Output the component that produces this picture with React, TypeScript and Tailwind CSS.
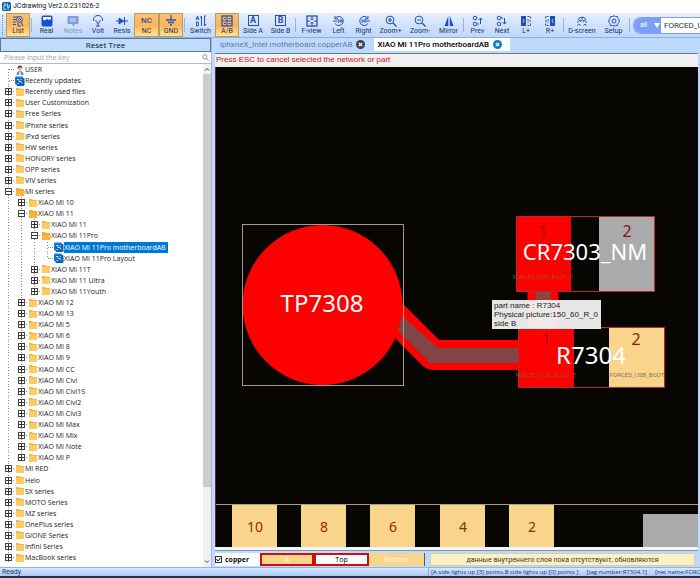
import React from "react";
import clsx from "clsx";

const BLUE = "#2450b8";

const icons: Record<string, React.ReactNode> = {
  list: (
    <>
      <path d="M1 2h5M1 4.500h3M1 7h3M1 9.500h3" />
      <circle cx="7.500" cy="4.500" r="3" />
      <circle cx="7.500" cy="4.500" r="1" />
      <path d="M9 7l2 4M6 8v3h3" />
    </>
  ),
  real: (
    <>
      <rect x="1" y="1" width="10" height="10" rx="1" fill="#174fd0" />
      <path d="M2 4.500V2h8v2l-2 1-2-1-2 1.500z" fill="#eaf4ff" stroke="none" />
    </>
  ),
  notes: (
    <>
      <path d="M1 1.500h10v7H8l-2 2.500v-2.500H1z" fill="#7f9ddd" stroke="#7f9ddd" />
      <path d="M3 4h6M3 6h6" stroke="#d9e8ff" />
    </>
  ),
  volt: <path d="M1.500 6a4.600 4.600 0 1 1 9 0M3.500 5L6 9l2.500-4M6 9v2.500M4 11h4" />,
  resis: (
    <>
      <path d="M0 6h12M8.500 2v8" />
      <path d="M3 3l4.500 3L3 9z" fill={BLUE} />
    </>
  ),
  gnd: <path d="M6 0v5M1 5h10M3 7.500h6M5 10h2" strokeWidth="1.300" />,
  switch: (
    <path d="M1 5l1.500-4L4 5M1.500 3.700h2M1.500 7v4H3q1.500-1 0-2 1-1 0-2zM6.500 1v10M6.500 1L5.500 3M9.500 1v10l1.500-2M9 1h2" />
  ),
  ab: (
    <>
      <rect x="1" y="1" width="10" height="10" strokeWidth="1.300" />
      <path d="M6 1v10M1 6h10M3 3.500h2M7.500 3.500h2M3 8.500h2M7.500 8.500h2" />
    </>
  ),
  frame: (
    <>
      <rect x="1" y="1" width="10" height="10" strokeWidth="1.300" />
      <path d="M6 1v3M6 8v3M1 6h3M8 6h3M4.500 3.500L6 5l1.500-1.500M4.500 8.500L6 7l1.500 1.500" />
    </>
  ),
  left: (
    <>
      <path d="M2 3.500A4.500 4.500 0 1 1 2 8.500M2 .800v3h3M0 6h4" />
      <circle cx="8" cy="6" r="1.200" />
      <path d="M4.500 4.700h1.300v2.600H4.500M5.800 6H4.500" strokeWidth=".7" />
    </>
  ),
  right: (
    <>
      <path d="M10 3.500A4.500 4.500 0 1 0 10 8.500M10 .800v3H7M12 6H9" />
      <circle cx="7" cy="6" r="1.200" />
      <path d="M3.500 4.700h1.300v2.600H3.500M4.800 6H3.500" strokeWidth=".7" />
    </>
  ),
  zoomIn: (
    <>
      <circle cx="5" cy="5" r="3.900" />
      <path d="M8 8l3.500 3.500M3 5h4M5 3v4" strokeWidth="1.200" />
    </>
  ),
  zoomOut: (
    <>
      <circle cx="5" cy="5" r="3.900" />
      <path d="M8 8l3.500 3.500M3 5h4" strokeWidth="1.200" />
    </>
  ),
  mirror: (
    <>
      <path d="M5.300 1v10H1.500z" fill="#174fd0" stroke="none" />
      <path d="M6.800 1v10h3.800z" fill="#174fd0" stroke="none" />
    </>
  ),
  prev: (
    <>
      <circle cx="3" cy="3" r="1.800" />
      <circle cx="3" cy="9" r="1.800" />
      <path d="M8.500 9V3M6.500 5l2-2 2 2M5 9h2" />
    </>
  ),
  next: (
    <>
      <circle cx="3" cy="3" r="1.800" />
      <circle cx="3" cy="9" r="1.800" />
      <path d="M8.500 3v6M6.500 7l2 2 2-2M5 3h2" />
    </>
  ),
  lplus: (
    <>
      <rect x="1.500" y="1.500" width="4" height="9" fill="#174fd0" />
      <path d="M7.500 1.500h3v2M7.500 10.500h3v-2M8 4v4M10 5v2" strokeDasharray="2 1" />
      <path d="M3 4l1 2-1 2" stroke="#9cc0ff" />
    </>
  ),
  rplus: (
    <>
      <rect x="6.500" y="1.500" width="4" height="9" fill="#174fd0" />
      <path d="M4.500 1.500h-3v2M4.500 10.500h-3v-2M4 4v4M2 5v2" strokeDasharray="2 1" />
      <path d="M9 4L8 6l1 2" stroke="#9cc0ff" />
    </>
  ),
  dscreen: (
    <path d="M2 5a4.200 4.200 0 0 1 8 0M1 7.500L4 5l1 2M11 7.500L8 5 7 7M1.500 10.500q1-3 3 0M7.500 10.500q2-3 3 0M6 3v3" />
  ),
  setup: (
    <>
      <path d="M6 .800l1.700.7 1.800.1.500 1.800L11.200 5v2L10 8.600l-.5 1.800-1.800.1L6 11.200l-1.700-.7-1.800-.1L2 8.600.800 7V5L2 3.400l.5-1.800 1.800-.1z" />
      <circle cx="6" cy="6" r="2" />
    </>
  ),
};

function Glyph({ name }: { name: string }) {
  if (name === "nc")
    return <span className="flex h-[12px] items-center text-[8px] font-medium leading-[12px] text-[#3b4c9c]">NC</span>;
  if (name === "a" || name === "b")
    return (
      <span className="mb-px flex size-[11px] items-center justify-center border border-[#2450b8] text-[9px] font-bold leading-[9px] text-[#2450b8]">
        {name.toUpperCase()}
      </span>
    );
  return (
    <svg viewBox="0 0 12 12" className="size-[12px] shrink-0" fill="none" stroke={BLUE} strokeWidth="1" aria-hidden="true">
      {icons[name]}
    </svg>
  );
}

type Tool = { label: string; icon: string; w: string; on?: boolean; off?: boolean };

const groups: Tool[][] = [
  [{ label: "List", icon: "list", w: "w-[24px]", on: true }],
  [
    { label: "Real", icon: "real", w: "w-[27px]" },
    { label: "Notes", icon: "notes", w: "w-[26px]", off: true },
    { label: "Volt", icon: "volt", w: "w-[24px]" },
    { label: "Resis", icon: "resis", w: "w-[24px]" },
    { label: "NC", icon: "nc", w: "w-[25px]", on: true },
    { label: "GND", icon: "gnd", w: "w-[24px]", on: true },
  ],
  [
    { label: "Switch", icon: "switch", w: "w-[29px]" },
    { label: "A/B", icon: "ab", w: "w-[24px]", on: true },
    { label: "Side A", icon: "a", w: "w-[28px]" },
    { label: "Side B", icon: "b", w: "w-[27px]" },
  ],
  [
    { label: "F-view", icon: "frame", w: "w-[29px]" },
    { label: "Left", icon: "left", w: "w-[25px]" },
    { label: "Right", icon: "right", w: "w-[25px]" },
    { label: "Zoom+", icon: "zoomIn", w: "w-[29px]" },
    { label: "Zoom-", icon: "zoomOut", w: "w-[30px]" },
    { label: "Mirror", icon: "mirror", w: "w-[27px]" },
  ],
  [
    { label: "Prev", icon: "prev", w: "w-[25px]" },
    { label: "Next", icon: "next", w: "w-[24px]" },
    { label: "L+", icon: "lplus", w: "w-[24px]" },
    { label: "R+", icon: "rplus", w: "w-[24px]" },
  ],
  [
    { label: "D-screen", icon: "dscreen", w: "w-[34px]" },
    { label: "Setup", icon: "setup", w: "w-[29px]" },
  ],
];

function Toolbar() {
  return (
    <div className="flex h-[25px] shrink-0 items-center border-b border-[#8fb0dc] bg-linear-to-b from-[#e6f0fd] via-[#d0e2fb] to-[#bfd8fb] pl-[2px] font-['Roboto',sans-serif]">
      <span className="mr-[3px] h-[20px] border-l border-dotted border-[#6c86b5]" />
      {groups.map((g, i) => (
        <React.Fragment key={i}>
          {i > 0 && <span className="mx-px h-[14px] w-px shrink-0 bg-[#98b3d8]" />}
          {g.map((t) => (
            <button
              key={t.label}
              className={clsx(
                "flex h-[24px] shrink-0 flex-col items-center justify-center text-[7px] leading-[9px]",
                t.w,
                t.off ? "text-[#8d99b0]" : "text-[#1c2f66]",
                t.on && "border border-[#b99a62] bg-linear-to-b from-[#fbc171] via-[#fbb557] to-[#ffe28f]"
              )}
            >
              <Glyph name={t.icon} />
              <span className="whitespace-nowrap">{t.label}</span>
            </button>
          ))}
        </React.Fragment>
      ))}
      <span className="mx-px h-[14px] w-px shrink-0 bg-[#98b3d8]" />
      <div className="ml-[2px] flex h-[17px] min-w-0 flex-1 overflow-hidden rounded-l-[8px] border border-r-0 border-[#7b9ff2] bg-white">
        <div className="relative flex w-[27px] shrink-0 items-center bg-[#7b9ff8]">
          <select aria-label="Search scope" className="w-full appearance-none bg-transparent pl-[6px] text-[7px] leading-[9px] text-white outline-none">
            <option>all</option>
          </select>
          <svg viewBox="0 0 6 5" className="absolute right-[1px] h-[5px] w-[6px]" aria-hidden="true">
            <path d="M0 0h6L3 5z" fill="#fff" />
          </svg>
        </div>
        <input
          aria-label="Network name"
          defaultValue="FORCED_USB_BOOT_1"
          className="w-[90px] shrink-0 bg-white pl-[3px] text-[8px] leading-[9px] text-[#333] outline-none"
        />
      </div>
    </div>
  );
}

type Node = { t: string; d: number; k: "user" | "app" | "folder" | "open"; sel?: boolean; last?: boolean };
const f = (d: number, ...names: string[]): Node[] => names.map((t) => ({ t, d, k: "folder" as const }));

const nodes: Node[] = [
  { t: "USER", d: 0, k: "user" },
  { t: "Recently updates", d: 0, k: "app" },
  ...f(0, "Recently used files", "User Customization", "Free Series", "iPhxne series", "iPxd series", "HW series", "HONORY series", "OPP series", "VIV series"),
  { t: "MI series", d: 0, k: "open" },
  ...f(1, "XIAO MI 10"),
  { t: "XIAO MI 11", d: 1, k: "open" },
  ...f(2, "XIAO MI 11"),
  { t: "XIAO MI 11Pro", d: 2, k: "open" },
  { t: "XIAO MI 11Pro motherboardAB", d: 3, k: "app", sel: true },
  { t: "XIAO MI 11Pro Layout", d: 3, k: "app", last: true },
  ...f(2, "XIAO MI 11T", "XIAO MI 11 Ultra"),
  { t: "XIAO MI 11Youth", d: 2, k: "folder", last: true },
  ...f(1, "XIAO MI 12", "XIAO MI 13", "XIAO MI 5", "XIAO MI 6", "XIAO MI 8", "XIAO MI 9", "XIAO MI CC", "XIAO MI Civi", "XIAO MI Civi1S", "XIAO MI Civi2", "XIAO MI Civi3", "XIAO MI Max", "XIAO MI Mix", "XIAO MI Note"),
  { t: "XIAO MI P", d: 1, k: "folder", last: true },
  ...f(0, "MI RED", "Helo", "SX series", "MOTO Series", "MZ series", "OnePlus series", "GIONE Series", "infini Series", "MacBook series"),
];

function NodeIcon({ k }: { k: Node["k"] }) {
  return (
    <svg viewBox="0 0 10 10" className="size-[10px] shrink-0" aria-hidden="true">
      {k === "folder" && (
        <>
          <path d="M1 1h3l1 1h4v7H1z" fill="#f3b73d" />
          <path d="M1 3h8v6H1z" fill="#fccb63" />
        </>
      )}
      {k === "open" && (
        <>
          <path d="M1 1h3l1 1h4v7H1z" fill="#f0a93a" />
          <path d="M1 4h9l-1 5H1z" fill="#fbb43e" />
        </>
      )}
      {k === "app" && (
        <>
          <rect x="0" y=".5" width="8" height="8" rx="1" fill="#1380d8" />
          <rect x="1.500" y="2" width="8" height="8" rx="1" fill="#0a63b8" />
          <path d="M2 3.500h2v2h2l1 2M5.500 3L7 4M2.500 7.500H4" stroke="#d8efff" fill="none" strokeWidth=".9" />
        </>
      )}
      {k === "user" && (
        <>
          <path d="M1.500 10q0-4 3.500-4t3.500 4z" fill="#4f94cd" />
          <path d="M4.500 6.500h1L6 10H4z" fill="#fff" />
          <circle cx="5" cy="3.500" r="2.200" fill="#eeb58d" />
          <path d="M2.500 3.500Q2.500.500 5 .500T7.500 3l-2-1z" fill="#4a3428" />
        </>
      )}
    </svg>
  );
}

function TreeRow({ n }: { n: Node }) {
  const boxed = n.k === "folder" || n.k === "open";
  return (
    <li className="flex min-h-0 flex-1 items-center pl-[2px]" role="treeitem" aria-selected={!!n.sel} aria-level={n.d + 1}>
      {Array.from({ length: n.d + 1 }, (_, i) => {
        const own = i === n.d;
        const guide = own && n.last ? "M6.500 0v6" : own && n.t === "USER" ? "M6.500 5v6" : "M6.500 0v11";
        return (
          <svg key={i} viewBox="0 0 13 11" className="h-[11px] w-[13px] shrink-0" fill="none" stroke="#8a8a8a" aria-hidden="true">
            <path d={guide} strokeDasharray="1 2" />
            {own && <path d="M7 5.500h6" strokeDasharray="1 1" />}
            {own && boxed && (
              <>
                <rect x="3.500" y="2.500" width="6" height="6" fill="#fff" stroke="#444" />
                <path d={n.k === "open" ? "M4 5.500h5" : "M4 5.500h5M6.500 3v5"} stroke="#333" />
              </>
            )}
          </svg>
        );
      })}
      <NodeIcon k={n.k} />
      <button
        className={clsx(
          "h-[11px] whitespace-nowrap pr-[2px] text-[7px] leading-[11px]",
          n.sel ? "bg-[#0078d7] text-white" : "text-[#1a1a1a]"
        )}
      >
        {n.t}
      </button>
    </li>
  );
}

function Sidebar() {
  return (
    <aside className="flex w-[212px] shrink-0 flex-col border-r border-[#9ab8e0] bg-white">
      <button className="h-[14px] shrink-0 border border-[#5f7896] bg-[#bfdbff] text-[8px] leading-[12px] text-[#111]">Reset Tree</button>
      <div className="flex h-[12px] shrink-0 items-center border-b border-[#b9b9b9] pl-[4px] pr-[2px]">
        <input
          aria-label="Search tree"
          placeholder="Please input the key"
          className="h-[11px] min-w-0 flex-1 text-[7px] leading-[11px] outline-none placeholder:text-[#a3a3a3]"
        />
        <svg viewBox="0 0 8 8" className="size-[7px]" fill="none" stroke="#888" aria-hidden="true">
          <circle cx="3.200" cy="3.200" r="2.500" />
          <path d="M5 5l2.500 2.500" />
        </svg>
      </div>
      <div className="flex min-h-0 flex-1">
        <ul role="tree" className="flex min-w-0 flex-1 flex-col overflow-hidden pb-[4px]">
          {nodes.map((n, i) => (
            <TreeRow key={i} n={n} />
          ))}
        </ul>
        <div className="flex w-[8px] shrink-0 flex-col items-center bg-[#f0f0f0]">
          <svg viewBox="0 0 8 10" className="h-[10px] w-[8px] shrink-0" fill="none" stroke="#444" aria-hidden="true">
            <path d="M2 6.500l2-2 2 2" />
          </svg>
          <div className="w-full grow-[41] bg-[#cdcdcd]" />
          <div className="grow-[7]" />
          <svg viewBox="0 0 8 10" className="h-[10px] w-[8px] shrink-0" fill="none" stroke="#444" aria-hidden="true">
            <path d="M2 3.500l2 2 2-2" />
          </svg>
        </div>
      </div>
    </aside>
  );
}

function CloseMark({ label, className }: { label: string; className: string }) {
  return (
    <button aria-label={label} className={clsx("flex size-[9px] shrink-0 items-center justify-center rounded-full", className)}>
      <svg viewBox="0 0 6 6" className="size-[5px]" stroke="#fff" strokeWidth="1.500" aria-hidden="true">
        <path d="M1 1l4 4M5 1L1 5" />
      </svg>
    </button>
  );
}

function Board() {
  const pads = [
    [232, "10"],
    [301, "8"],
    [370, "6"],
    [440, "4"],
    [509, "2"],
  ] as const;
  return (
    <svg viewBox="215 67 483 480" preserveAspectRatio="xMinYMin slice" className="absolute inset-0 size-full font-['Noto_Sans',sans-serif]" textAnchor="middle">
      <rect x="215" y="67" width="483" height="480" fill="#070602" />
      <path d="M390 312L433 355H525" fill="none" stroke="#f00" strokeWidth="30" strokeLinejoin="round" />
      <path d="M543 280V345" stroke="#f00" strokeWidth="31" />
      <path d="M543 285V345" stroke="#8a4545" strokeWidth="15" />
      <circle cx="322.500" cy="305" r="80" fill="#f00" />
      <path d="M402 316L438 348H519V363H430L398 331z" fill="#804545" />
      <rect x="242.500" y="224.500" width="161" height="161" fill="none" stroke="#a29a8c" />
      <text x="322" y="312" fontSize="24" fill="#fff">TP7308</text>

      <rect x="516" y="216" width="55" height="76" fill="#f00" />
      <rect x="599" y="216" width="56" height="76" fill="#aaa" />
      <rect x="516.500" y="216.500" width="138" height="75" fill="none" stroke="#b72828" />
      <text x="543" y="237" fontSize="16" fill="#a01010">1</text>
      <text x="627" y="237" fontSize="16" fill="#861414">2</text>
      <text x="585" y="260" fontSize="22" fill="#fff">CR7303_NM</text>
      <text x="543" y="279" fontSize="6" fill="#8c5a20" className="font-['Roboto',sans-serif]">FORCED_USB_BOOT_1</text>

      <rect x="518" y="327" width="56" height="60" fill="#f00" />
      <rect x="609" y="327" width="56" height="60" fill="#f8d58b" />
      <rect x="518.500" y="327.500" width="146" height="60" fill="none" stroke="#b72828" />
      <text x="546" y="345" fontSize="16" fill="#a01010">1</text>
      <text x="636" y="345" fontSize="16" fill="#8a1c10">2</text>
      <text x="591" y="364" fontSize="24" fill="#fff">R7304</text>
      <text x="546" y="377" fontSize="6" fill="#8c5a20" className="font-['Roboto',sans-serif]">FORCED_USB_BOOT_1</text>
      <text x="637" y="377" fontSize="6" fill="#80774f" className="font-['Roboto',sans-serif]">FORCED_USB_BOOT</text>

      <path d="M216 504.500H698" stroke="#a39c8a" />
      {pads.map(([x, t]) => (
        <g key={t}>
          <rect x={x} y="505" width="45" height="42" fill="#f8d58b" />
          <text x={x + 23} y="532" fontSize="14" fill="#96290c">{t}</text>
        </g>
      ))}
      <rect x="643" y="514" width="55" height="33" fill="#aaa" />
      <path d="M215.500 67V547" stroke="#7b1f2e" />

      <g className="font-['Liberation_Sans',Arial,sans-serif]" textAnchor="start" fontSize="8" fill="#222">
        <rect x="492" y="300" width="109" height="29" fill="#f4f4f4" fillOpacity=".94" />
        <text x="494" y="308">part name : R7304</text>
        <text x="494" y="317">Physical picture:150_60_R_0</text>
        <text x="494" y="326">side B</text>
      </g>
    </svg>
  );
}

function Workspace() {
  return (
    <main className="flex min-w-0 flex-1 flex-col bg-[#bfdaff] pl-[3px]">
      <div className="flex h-[15px] shrink-0 items-start font-['Roboto',sans-serif] text-[8px]" role="tablist">
        <div className="flex h-[13px] items-center gap-[4px] pl-[5px] pr-[9px] text-[#5d7ca3]">
          <button role="tab" className="whitespace-nowrap leading-[13px]">iphxneX_Intel motherboard copperAB</button>
          <CloseMark label="Close iphxneX" className="bg-[#444]" />
        </div>
        <div className="flex h-[13px] items-center gap-[4px] bg-white pl-[3px] pr-[8px] font-medium text-black">
          <button role="tab" aria-selected="true" className="whitespace-nowrap leading-[13px]">XIAO MI 11Pro motherboardAB</button>
          <CloseMark label="Close XIAO MI 11Pro" className="bg-[#0c7fc9]" />
        </div>
      </div>
      <div className="mr-[2px] flex min-h-0 flex-1 flex-col">
        <p className="h-[14px] shrink-0 border-t border-[#6d7a8c] bg-[#f0f0f0] pl-px font-['Liberation_Sans',Arial,sans-serif] text-[8px] leading-[12px] text-[#cc1420]">
          Press ESC to cancel selected the network or part
        </p>
        <div className="relative min-h-0 flex-1 overflow-hidden bg-[#070602]">
          <Board />
        </div>
        <div className="h-[4px] shrink-0 border-b border-[#7f93ad] bg-[#f4f4f4]" />
      </div>
      <div className="flex h-[16px] shrink-0 items-center pr-[5px] text-[7px] leading-[9px]">
        <label className="flex h-[13px] w-[45px] items-center gap-[3px] bg-white font-bold text-[#111]">
          <input type="checkbox" defaultChecked className="sr-only" />
          <svg viewBox="0 0 7 7" className="size-[7px]" fill="#fff" stroke="#333" aria-hidden="true">
            <rect x=".5" y=".5" width="6" height="6" />
            <path d="M1.500 3l1.500 2L5.500 2" fill="none" stroke="#000" />
          </svg>
          copper
        </label>
        <button className="h-[13px] w-[54px] border-2 border-[#cc1010] bg-[#f8d58b] leading-[9px] text-[#fff8e4]">A</button>
        <button className="h-[13px] w-[55px] border-2 border-[#cc1010] bg-white leading-[9px] text-black">Top</button>
        <button className="h-[13px] w-[56px] border-r border-[#4a5a70] bg-[#f8d58b] leading-[9px] text-[#fff8e4]">Bottom</button>
        <p className="ml-[5px] h-[13px] min-w-0 flex-1 border border-[#d9cfa6] bg-[#fdf0c4] text-center font-['Roboto',sans-serif] text-[7px] leading-[12px] text-[#3a382c]">
          данные внутреннего слоя пока отсутствуют, обновляются
        </p>
      </div>
    </main>
  );
}

export default function App() {
  return (
    <div className="flex h-screen flex-col overflow-hidden bg-[#bfdaff] font-['Open_Sans','Noto_Sans',sans-serif]">
      <header className="flex h-[13px] shrink-0 items-center gap-[2px] bg-white pl-[2px] font-['Roboto',sans-serif] text-[7px] leading-[13px] text-[#111]">
        <svg viewBox="0 0 10 10" className="size-[9px]" aria-hidden="true">
          <rect width="10" height="10" rx="2" fill="#0a62a8" />
          <path d="M2 2h2v2H2v4h3M6 1.500V6h2V3M6 8h2" fill="none" stroke="#d6efff" />
        </svg>
        <h1>JCdrawing Ver2.0.231026-2</h1>
      </header>
      <Toolbar />
      <div className="flex min-h-0 flex-1">
        <Sidebar />
        <Workspace />
      </div>
      <footer className="flex h-[11px] shrink-0 items-center overflow-hidden whitespace-nowrap border-y border-b-2 border-t-[#8fb3e6] border-b-[#203552] bg-linear-to-b from-[#d8e8ff] to-[#a9caf6] pl-[2px] text-[6px] leading-[8px] text-[#20376b]">
        <span className="flex-1 font-['Roboto',sans-serif] text-[7px]">Ready</span>
        <div className="flex w-[272px] shrink-0 gap-[8px] overflow-hidden border-l border-[#8fabd3] pl-[2px]">
          <span className="shrink-0">[A side lights up [3] points,B side lights up [0] points ]</span>
          <span className="shrink-0">[tag number:R7304.1]</span>
          <span className="shrink-0">[net name:FORCED_USB_BOOT_1]</span>
        </div>
      </footer>
    </div>
  );
}
